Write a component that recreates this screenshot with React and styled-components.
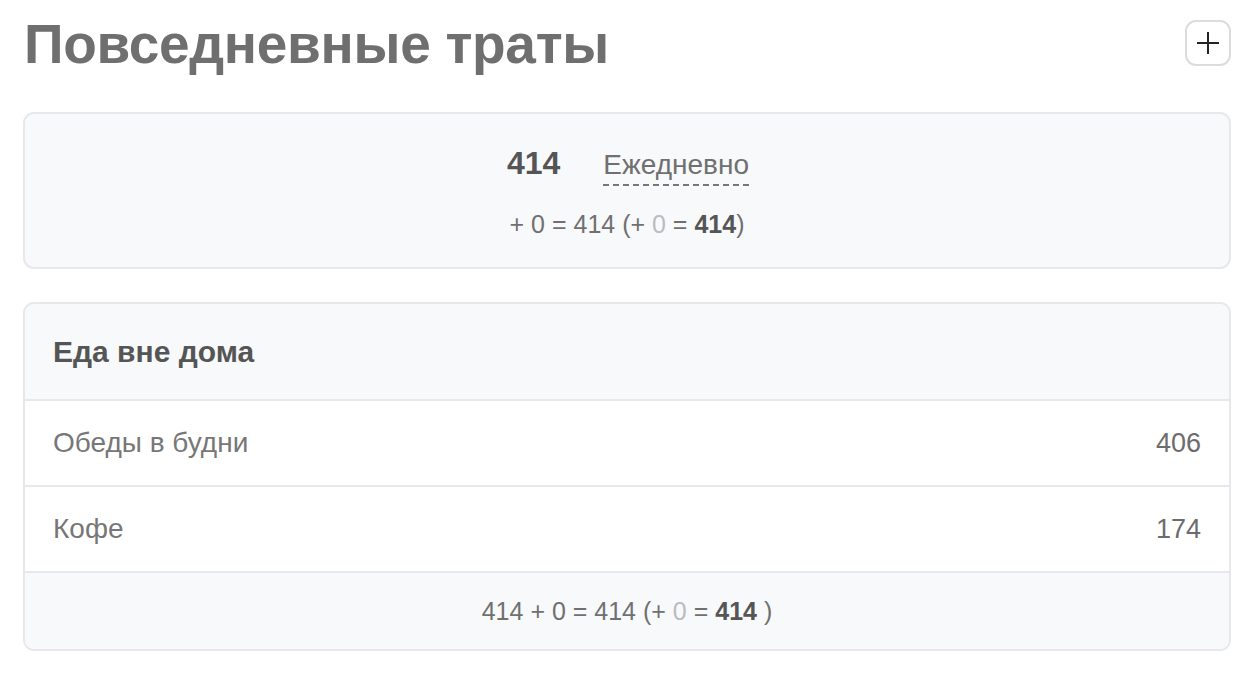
import React from "react";
import styled, { createGlobalStyle } from "styled-components";

const GlobalStyle = createGlobalStyle`
  body {
    margin: 0;
    background: #fff;
    font-family: "Liberation Sans", Arial, Helvetica, sans-serif;
    color: #777;
  }
`;

const Page = styled.div`
  padding: 7px 25px 0 23px;
`;

const Header = styled.header`
  display: flex;
  align-items: center;
  justify-content: space-between;
  height: 70px;
  margin-bottom: 35px;
  h1 {
    margin: 0;
    padding: 3px 0 0 1px;
    font-size: 55px;
    font-weight: 700;
    color: #6f6f6f;
    letter-spacing: -0.3px;
  }
`;

const AddButton = styled.button`
  width: 46px;
  height: 46px;
  border: 2px solid #dcdcdc;
  border-radius: 11px;
  background: #fff;
  display: flex;
  align-items: center;
  justify-content: center;
  padding: 0;
  margin-top: 2px;
  color: #222;
  cursor: pointer;
`;

const Card = styled.section`
  border: 2px solid #e6e8eb;
  border-radius: 11px;
  background: ${(p) => (p.$muted ? "#f8f9fb" : "#fff")};
  overflow: hidden;
  margin-bottom: 33px;
`;

const Summary = styled.div`
  padding: 31px 0 28px;
  display: flex;
  flex-direction: column;
  align-items: center;
  gap: 24px;
`;

const SummaryTop = styled.div`
  display: flex;
  align-items: baseline;
  gap: 43px;
  padding-left: 2px;
`;

const Total = styled.span`
  font-size: 32px;
  font-weight: 700;
  color: #555;
`;

const Period = styled.span`
  font-size: 28px;
  color: #707070;
  padding-bottom: 3px;
  border-bottom: 2px dashed #777;
`;

const Formula = styled.div`
  font-size: 25px;
  color: #707070;
  b {
    color: #555;
  }
  span {
    color: #b9bcc0;
  }
`;

const Row = styled.div`
  display: flex;
  align-items: center;
  padding: 0 28px;
  height: ${(p) => p.$h || 84}px;
  background: ${(p) => (p.$muted ? "#f8f9fb" : "#fff")};
  justify-content: ${(p) => (p.$center ? "center" : "space-between")};
  & + & {
    border-top: 2px solid #e6e8eb;
  }
`;

const GroupTitle = styled.h2`
  margin: 0;
  font-size: 30px;
  font-weight: 700;
  color: #555;
`;

const Label = styled.span`
  font-size: 28px;
  color: #777;
`;

const Value = styled.span`
  font-size: 27px;
  color: #6c6c6c;
`;

const items = [
  { name: "Обеды в будни", amount: 406 },
  { name: "Кофе", amount: 174 },
];

export default function App() {
  return (
    <Page>
      <GlobalStyle />
      <Header>
        <h1>Повседневные траты</h1>
        <AddButton aria-label="Добавить">
          <svg width="24" height="24" viewBox="0 0 24 24">
            <path d="M12 1v22M1 12h22" stroke="#222" strokeWidth="2" fill="none" />
          </svg>
        </AddButton>
      </Header>

      <Card $muted>
        <Summary>
          <SummaryTop>
            <Total>414</Total>
            <Period>Ежедневно</Period>
          </SummaryTop>
          <Formula>
            + 0 = 414 (+ <span>0</span> = <b>414</b>)
          </Formula>
        </Summary>
      </Card>

      <Card>
        <Row $muted $h={95}>
          <GroupTitle>Еда вне дома</GroupTitle>
        </Row>
        {items.map((it) => (
          <Row key={it.name}>
            <Label>{it.name}</Label>
            <Value>{it.amount}</Value>
          </Row>
        ))}
        <Row $muted $center $h={76}>
          <Formula>
            414 + 0 = 414 (+ <span>0</span> = <b>414</b> )
          </Formula>
        </Row>
      </Card>
    </Page>
  );
}
